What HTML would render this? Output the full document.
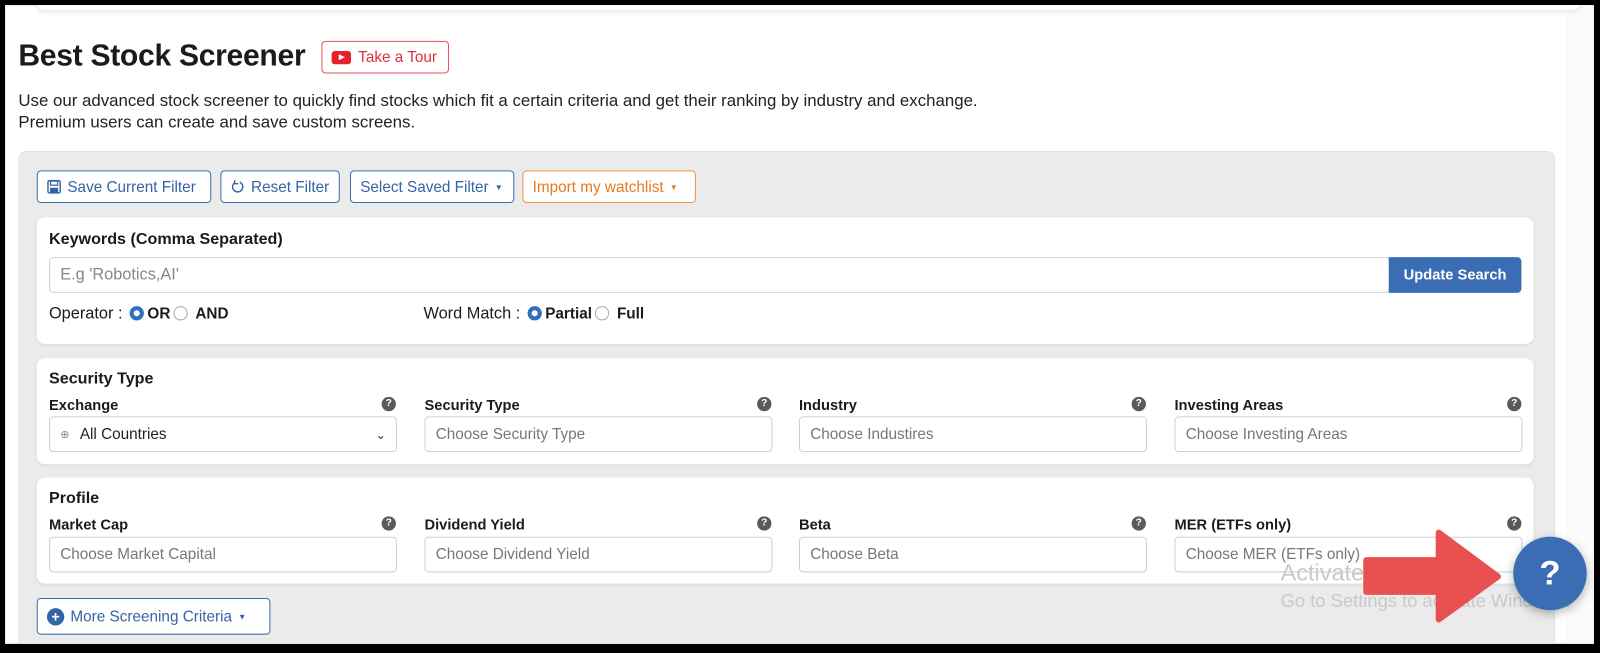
<!DOCTYPE html>
<html><head><meta charset="utf-8"><style>
*{box-sizing:border-box;margin:0;padding:0}
body{width:1600px;height:653px;background:#000;font-family:"Liberation Sans",sans-serif;position:relative;overflow:hidden;color:#1b1b1b}
.wrap{position:absolute;left:0;top:0;width:1568px;height:640px;transform:scale(1.0204);transform-origin:0 0}
.page{position:absolute;left:5px;top:5px;width:1557px;height:626px;background:#fff;overflow:hidden}
.abs{position:absolute}
.strip{position:absolute;left:1530px;top:0;width:27px;height:626px;background:#fbfbfb}
.topcard{position:absolute;left:30px;top:-10px;width:1515px;height:16px;border:1px solid #e3e6e8;border-radius:8px;box-shadow:0 2px 4px rgba(0,0,0,.06);background:#fff}
h1{position:absolute;left:13px;top:33px;font-size:29.5px;font-weight:bold;letter-spacing:-0.3px}
.tour{position:absolute;left:310px;top:35px;width:125px;height:32px;border:1.5px solid #e8505b;border-radius:4px;color:#e0303c;font-size:15px;display:flex;align-items:center;padding-left:9px;gap:7px}
.yt{width:19px;height:13px;background:#e8202a;border-radius:3px;position:relative}
.yt:after{content:"";position:absolute;left:7px;top:3.5px;border-left:6px solid #fff;border-top:3px solid transparent;border-bottom:3px solid transparent}
.desc{position:absolute;left:13px;top:84px;font-size:16.5px;line-height:21px;color:#222}
.panel{position:absolute;left:13px;top:143px;width:1506px;height:520px;background:#ebebeb;border-radius:8px;border:1px solid #e2e2e2}
.btn{position:absolute;top:162px;height:32px;border:1.5px solid #3d6fae;border-radius:4px;color:#3463a6;font-size:15px;display:flex;align-items:center;padding:0 9px;background:#fff;gap:6px;white-space:nowrap}
.card{position:absolute;left:31px;width:1467px;background:#fff;border-radius:8px;box-shadow:0 1px 3px rgba(0,0,0,.08)}
.lbl{position:absolute;font-size:14.4px;font-weight:bold}
.inp{position:absolute;height:35px;border:1px solid #ccd2d8;border-radius:4px;font-size:15px;color:#777;display:flex;align-items:center;padding-left:10px;background:#fff}
.q{position:absolute;width:14px;height:14px;border-radius:50%;background:#5a5a5a;color:#fff;font-size:10px;font-weight:bold;text-align:center;line-height:14px}
.r{display:inline-block;width:14px;height:14px;border-radius:50%;border:1px solid #aaa;vertical-align:-2px;margin:0 3px}
.r.on{border:4px solid #2f6fbf}
.row{position:absolute;font-size:16px}
.row b{font-size:15px}
</style></head><body>
<div class="wrap">
<div class="page">
<div class="strip"></div>
<div class="topcard"></div>
<h1>Best Stock Screener</h1>
<div class="tour"><span class="yt"></span>Take a Tour</div>
<div class="desc">Use our advanced stock screener to quickly find stocks which fit a certain criteria and get their ranking by industry and exchange.<br>Premium users can create and save custom screens.</div>
<div class="panel"></div>
<div class="btn" style="left:31px;width:171px"><svg width="14" height="14" viewBox="0 0 14 14"><rect x="1" y="1" width="12" height="12" rx="1.5" fill="none" stroke="#3463a6" stroke-width="1.4"/><rect x="3.5" y="1.5" width="7" height="4" fill="none" stroke="#3463a6" stroke-width="1.2"/><rect x="3" y="8" width="8" height="5" fill="#3463a6"/></svg>Save Current Filter</div>
<div class="btn" style="left:211px;width:117px"><svg width="14" height="14" viewBox="0 0 14 14"><path d="M9 2.5A5 5 0 1 1 4 3" fill="none" stroke="#3463a6" stroke-width="1.4"/><path d="M4 0.5V4H7.5" fill="none" stroke="#3463a6" stroke-width="1.3"/></svg>Reset Filter</div>
<div class="btn" style="left:338px;width:161px">Select Saved Filter <span style="font-size:8px">▼</span></div>
<div class="btn" style="left:507px;width:170px;border-color:#f0923a;color:#e87a1e">Import my watchlist <span style="font-size:8px">▼</span></div>

<div class="card" style="top:208px;height:124px">
 <div class="lbl" style="left:12px;top:13px;font-size:15.8px">Keywords (Comma Separated)</div>
 <div class="inp" style="left:12px;top:39px;width:1314px;color:#888;font-size:16px">E.g 'Robotics,AI'</div>
 <div class="abs" style="left:1325px;top:39px;width:130px;height:35px;background:#3a6db4;border-radius:0 4px 4px 0;color:#fff;font-weight:bold;font-size:14.4px;display:flex;align-items:center;justify-content:center">Update Search</div>
 <div class="row" style="left:12px;top:86px">Operator : <span class="r on"></span><b>OR</b><span class="r"></span> <b>AND</b></div>
 <div class="row" style="left:379px;top:86px">Word Match : <span class="r on"></span><b>Partial</b><span class="r"></span> <b>Full</b></div>
</div>

<div class="card" style="top:346px;height:104px">
 <div class="lbl" style="left:12px;top:12px;font-size:15.8px">Security Type</div>
 <div class="lbl" style="left:12px;top:39px">Exchange</div><div class="q" style="left:338px;top:38px">?</div>
 <div class="inp" style="left:12px;top:57px;width:341px;color:#222"><span style="color:#888;font-size:11px;margin-right:10px">⊕</span>All Countries<span style="position:absolute;right:10px;font-size:12px;color:#333">⌄</span></div>
 <div class="lbl" style="left:380px;top:39px">Security Type</div><div class="q" style="left:706px;top:38px">?</div>
 <div class="inp" style="left:380px;top:57px;width:341px">Choose Security Type</div>
 <div class="lbl" style="left:747px;top:39px">Industry</div><div class="q" style="left:1073px;top:38px">?</div>
 <div class="inp" style="left:747px;top:57px;width:341px">Choose Industires</div>
 <div class="lbl" style="left:1115px;top:39px">Investing Areas</div><div class="q" style="left:1441px;top:38px">?</div>
 <div class="inp" style="left:1115px;top:57px;width:341px">Choose Investing Areas</div>
</div>

<div class="card" style="top:463px;height:104px">
 <div class="lbl" style="left:12px;top:12px;font-size:15.8px">Profile</div>
 <div class="lbl" style="left:12px;top:39px">Market Cap</div><div class="q" style="left:338px;top:38px">?</div>
 <div class="inp" style="left:12px;top:58px;width:341px">Choose Market Capital</div>
 <div class="lbl" style="left:380px;top:39px">Dividend Yield</div><div class="q" style="left:706px;top:38px">?</div>
 <div class="inp" style="left:380px;top:58px;width:341px">Choose Dividend Yield</div>
 <div class="lbl" style="left:747px;top:39px">Beta</div><div class="q" style="left:1073px;top:38px">?</div>
 <div class="inp" style="left:747px;top:58px;width:341px">Choose Beta</div>
 <div class="lbl" style="left:1115px;top:39px">MER (ETFs only)</div><div class="q" style="left:1441px;top:38px">?</div>
 <div class="inp" style="left:1115px;top:58px;width:341px">Choose MER (ETFs only)</div>
</div>

<div class="btn" style="left:31px;top:581px;width:229px;height:36px;font-size:15px"><span style="width:17px;height:17px;border-radius:50%;background:#3463a6;color:#fff;font-size:14px;line-height:16px;text-align:center;font-weight:bold">+</span>More Screening Criteria <span style="font-size:8px">▼</span></div>

<div class="abs" style="left:1250px;top:543px;font-size:23px;color:#c9c9c9">Activate Windows</div>
<div class="abs" style="left:1250px;top:574px;font-size:18px;color:#c9c9c9">Go to Settings to activate Windows.</div>
<svg class="abs" style="left:1330px;top:513px" width="140" height="93" viewBox="0 0 140 93"><path d="M4 31H75V4L133 47L75 89V62H4Z" fill="#e85150" stroke="#e85150" stroke-width="6" stroke-linejoin="round"/></svg>
<div class="abs" style="left:1478px;top:521px;width:72px;height:72px;border-radius:50%;background:#3a6db4;box-shadow:0 3px 10px rgba(0,0,0,.3);color:#fff;font-size:34px;font-weight:bold;text-align:center;line-height:72px">?</div>
</div>
</div>
</body></html>
